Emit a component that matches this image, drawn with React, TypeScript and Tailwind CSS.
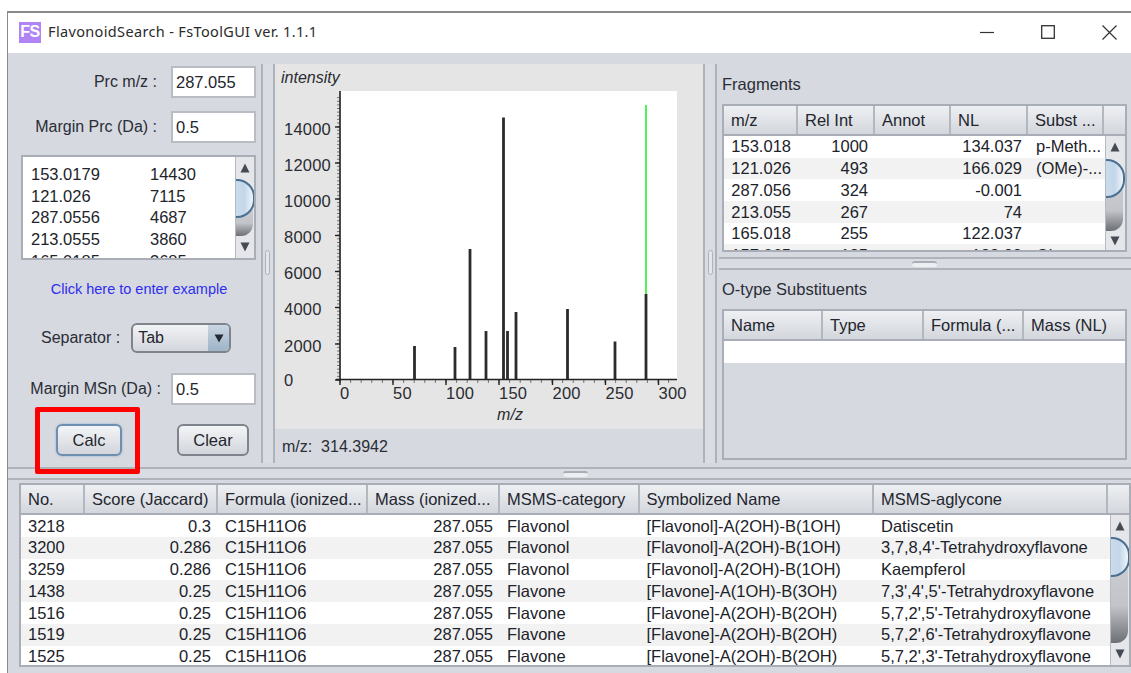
import React from "react";

const FONT = { fontFamily: '"Liberation Sans", Arial, sans-serif' };

function ScrollBar({ className, thumbTop, thumbH, shadeH }: { className: string; thumbTop: number; thumbH: number; shadeH: number }) {
  return (
    <div className={"relative shrink-0 overflow-hidden bg-[#e4e6ea] border-l border-[#b5b9c1] " + className}>
      <svg className="absolute left-[4px] top-[6px]" width="10" height="10" viewBox="0 0 10 10">
        <path d="M5 0.5 L9.5 9.5 L0.5 9.5 Z" fill="#454a55" />
      </svg>
      <svg className="absolute left-[4px] bottom-[6px]" width="10" height="10" viewBox="0 0 10 10">
        <path d="M5 9.5 L9.5 0.5 L0.5 0.5 Z" fill="#454a55" />
      </svg>
      <div
        className="absolute left-0 w-[17px] rounded-br-[12px] bg-gradient-to-b from-[#c9cbd0] via-[#c2c4c9] to-[#6d7076]"
        style={{ top: thumbTop + thumbH - 8, height: shadeH + 8 }}
      />
      <div
        className="absolute left-0 w-[19px] rounded-r-[18px] border-2 border-l-0 border-[#4a6f90] bg-gradient-to-r from-[#c9dcec] via-[#c3d7e9] to-[#f0f5fa]"
        style={{ top: thumbTop, height: thumbH }}
      />
    </div>
  );
}

function Field({ label, value, gap }: { label: string; value: string; gap: number }) {
  return (
    <div className="flex items-center justify-end">
      <span style={{ marginRight: gap }} className="text-[#2a2d36] text-[16px] whitespace-nowrap">{label}</span>
      <div className="w-[85px] h-[32px] bg-white border-2 border-[#b9bcc3] flex items-center pl-[3px] text-[#24262c] text-[16.5px]">
        {value}
      </div>
    </div>
  );
}

function HeaderCell({ w, children, last }: { w: number; children?: React.ReactNode; last?: boolean }) {
  return (
    <div
      style={{ width: w }}
      className={
        "shrink-0 h-full flex items-center pl-[7px] whitespace-nowrap overflow-hidden text-[#23262e] text-[16.5px] bg-gradient-to-b from-[#eef0f3] to-[#d3d6dc] " +
        (last ? "" : "border-r-2 border-[#b3b7bf]")
      }
    >
      {children}
    </div>
  );
}

type Cell = { t: string; w: number; right?: boolean; pl?: number; pr?: number };

function Row({ cells, odd, h }: { cells: Cell[]; odd: boolean; h: number }) {
  return (
    <div style={{ height: h }} className={"flex items-center text-[#20222a] text-[16.5px] whitespace-nowrap " + (odd ? "bg-[#f2f2f2]" : "bg-white")}>
      {cells.map((c, i) => (
        <div
          key={i}
          style={{ width: c.w, paddingLeft: c.pl ?? 0, paddingRight: c.pr ?? 0 }}
          className={"shrink-0 overflow-hidden " + (c.right ? "text-right" : "")}
        >
          {c.t}
        </div>
      ))}
    </div>
  );
}

// Vertical divider between the panes, with its small grip
function VSplit({ gripLeft }: { gripLeft: number }) {
  return (
    <div className="relative w-[14px] shrink-0 self-stretch border-x-2 border-[#aeb2b9] bg-[#d9dce2]">
      <div style={{ left: gripLeft }} className="absolute top-[186px] w-[5px] h-[25px] rounded-[3px] border border-[#aeb2b9] bg-[#e4e6ea]" />
    </div>
  );
}

function HSplit({ className, gripLeft }: { className: string; gripLeft: number }) {
  return (
    <div className={"relative shrink-0 h-[13px] border-y-2 border-[#aeb2b9] bg-[#d9dce2] " + className}>
      <div style={{ left: gripLeft }} className="absolute top-[2px] h-[6px] w-[25px] rounded-[3px] bg-[#eceef1] border-t-2 border-[#a9adb5]" />
    </div>
  );
}

const Y_TICKS: [string, number][] = [
  ["14000", 127],
  ["12000", 163],
  ["10000", 199],
  ["8000", 235.5],
  ["6000", 271.5],
  ["4000", 307.5],
  ["2000", 344],
  ["0", 380],
];
const X_TICKS: [string, number][] = [
  ["0", 340],
  ["50", 393],
  ["100", 446],
  ["150", 499],
  ["200", 552.5],
  ["250", 605.5],
  ["300", 658.5],
];
const PEAKS: [number, number][] = [
  [414.5, 346],
  [455, 347],
  [470, 249],
  [486, 331],
  [503.5, 117.5],
  [507.5, 331],
  [516, 312],
  [567.5, 309],
  [615, 341.5],
  [646, 294],
];

// Mass spectrum plot; coordinates are page positions shifted by the panel's corner
function Spectrum() {
  const ox = 275;
  const oy = 64;
  const minor: React.ReactNode[] = [];
  for (let v = 0; v <= 78; v++) {
    const y = 380 - v * 3.62 - oy;
    if (y < 27) break;
    minor.push(<line key={"y" + v} x1={337 - ox} x2={340 - ox} y1={y} y2={y} stroke="#55585f" strokeWidth="0.8" />);
  }
  for (let v = 0; v <= 31; v++) {
    const x = 340 + v * 10.6 - ox;
    minor.push(<line key={"x" + v} x1={x} x2={x} y1={380 - oy} y2={383 - oy} stroke="#55585f" strokeWidth="0.8" />);
  }
  return (
    <svg width="428" height="365" className="block" style={FONT}>
      <rect x={341 - ox} y={91 - oy} width={336} height={288} fill="#fff" />
      {minor}
      <line x1={340 - ox} x2={340 - ox} y1={91 - oy} y2={381 - oy} stroke="#222" strokeWidth="1.6" />
      <line x1={336 - ox} x2={677 - ox} y1={379.5 - oy} y2={379.5 - oy} stroke="#222" strokeWidth="1.6" />
      {Y_TICKS.map(([t, y]) => (
        <g key={t}>
          <line x1={335 - ox} x2={340 - ox} y1={y - oy} y2={y - oy} stroke="#222" strokeWidth="1.4" />
          <text x={284 - ox} y={y - oy + (t === "0" ? 6 : 7.5)} fontSize="16.5" letterSpacing="0.2" fill="#2a2c31">{t}</text>
        </g>
      ))}
      {X_TICKS.map(([t, x]) => (
        <g key={t}>
          <line x1={x - ox} x2={x - ox} y1={379 - oy} y2={385 - oy} stroke="#222" strokeWidth="1.4" />
          <text x={x - ox} y={399 - oy} fontSize="16.5" letterSpacing="0.2" fill="#2a2c31">{t}</text>
        </g>
      ))}
      <line x1={646 - ox} x2={646 - ox} y1={105 - oy} y2={295 - oy} stroke="#22f02a" strokeWidth="1.6" />
      {PEAKS.map(([x, top]) => (
        <line key={x} x1={x - ox} x2={x - ox} y1={top - oy} y2={379 - oy} stroke="#2b2b2b" strokeWidth="2.8" />
      ))}
      <text x={281 - ox} y={83 - oy} fontSize="16" fontStyle="italic" fill="#2a2c31">intensity</text>
      <text x={510 - ox} y={420 - oy} fontSize="16" fontStyle="italic" textAnchor="middle" fill="#2a2c31">m/z</text>
    </svg>
  );
}

const PEAK_LIST = [
  ["153.0179", "14430"],
  ["121.026", "7115"],
  ["287.0556", "4687"],
  ["213.0555", "3860"],
  ["165.0185", "3685"],
];

const FRAGMENTS = [
  ["153.018", "1000", "", "134.037", "p-Meth..."],
  ["121.026", "493", "", "166.029", "(OMe)-..."],
  ["287.056", "324", "", "-0.001", ""],
  ["213.055", "267", "", "74", ""],
  ["165.018", "255", "", "122.037", ""],
  ["157.065", "185", "", "129.99", "Ginno..."],
];

const HITS = [
  ["3218", "0.3", "[Flavonol]-A(2OH)-B(1OH)", "Flavonol", "Datiscetin"],
  ["3200", "0.286", "[Flavonol]-A(2OH)-B(1OH)", "Flavonol", "3,7,8,4'-Tetrahydroxyflavone"],
  ["3259", "0.286", "[Flavonol]-A(2OH)-B(1OH)", "Flavonol", "Kaempferol"],
  ["1438", "0.25", "[Flavone]-A(1OH)-B(3OH)", "Flavone", "7,3',4',5'-Tetrahydroxyflavone"],
  ["1516", "0.25", "[Flavone]-A(2OH)-B(2OH)", "Flavone", "5,7,2',5'-Tetrahydroxyflavone"],
  ["1519", "0.25", "[Flavone]-A(2OH)-B(2OH)", "Flavone", "5,7,2',6'-Tetrahydroxyflavone"],
  ["1525", "0.25", "[Flavone]-A(2OH)-B(2OH)", "Flavone", "5,7,2',3'-Tetrahydroxyflavone"],
];

export default function App() {
  return (
    <div style={FONT} className="w-[1131px] h-[673px] overflow-hidden bg-white pl-[7px] pt-[11px]">
      <div className="relative w-[1124px] h-[662px] flex flex-col border-l border-t-2 border-[#8a8a8a]">
        {/* Title bar */}
        <div className="h-[40px] shrink-0 bg-white flex items-center pl-[11px] pb-[2px]">
          <div className="w-[22px] h-[21px] bg-[#b184f5] text-white text-[16px] font-bold flex items-center justify-center tracking-tight">FS</div>
          <span className="ml-[7px] text-[#2b2b2b] tracking-[0.35px] text-[14.5px]" style={{ fontFamily: '"Noto Sans", sans-serif' }}>
            FlavonoidSearch - FsToolGUI ver. 1.1.1
          </span>
          <div className="ml-auto flex items-center gap-[47px] pr-[14px]">
            <svg width="14" height="14" viewBox="0 0 14 14"><path d="M0 7.5H14" stroke="#333" strokeWidth="1.2" /></svg>
            <svg width="14" height="14" viewBox="0 0 14 14"><rect x="0.7" y="0.7" width="12.6" height="12.6" fill="none" stroke="#333" strokeWidth="1.3" /></svg>
            <svg width="15" height="15" viewBox="0 0 15 15"><path d="M0.5 0.5L14.5 14.5M14.5 0.5L0.5 14.5" stroke="#333" strokeWidth="1.2" /></svg>
          </div>
        </div>

        <div className="flex-1 bg-[#d6d9e0] flex flex-col min-h-0">
          {/* Upper panes */}
          <div className="h-[414px] shrink-0 flex pt-[11px] pb-[4px]">
            {/* Input pane */}
            <div className="w-[253px] shrink-0 pr-[5px] pt-[2px]">
              <Field label="Prc m/z :" value="287.055" gap={14} />
              <div className="h-[13px]" />
              <Field label="Margin Prc (Da) :" value="0.5" gap={14} />
              <div className="ml-[13px] mt-[12px] h-[105px] flex border-2 border-[#a9adb5] bg-white overflow-hidden">
                <div className="flex-1 pt-[7px] pl-[8px] text-[16.5px] leading-[21.7px] text-[#22242a]">
                  {PEAK_LIST.map(([a, b]) => (
                    <div key={a} className="flex whitespace-nowrap"><span className="w-[119px]">{a}</span><span>{b}</span></div>
                  ))}
                </div>
                <ScrollBar className="w-[19px]" thumbTop={22} thumbH={39} shadeH={18} />
              </div>
              <div className="mt-[21px] text-center text-[14.5px] leading-[16px] text-[#2d2df0] pl-[14px]">Click here to enter example</div>
              <div className="mt-[26px] flex items-center pl-[33px]">
                <span className="text-[16px] text-[#2a2d36] whitespace-nowrap">Separator :</span>
                <div className="ml-[11px] w-[100px] h-[30px] rounded-[6px] border-2 border-[#7f848c] bg-gradient-to-b from-[#f2f3f5] to-[#d3d6dc] flex overflow-hidden">
                  <span className="flex-1 pl-[5px] text-[16px] leading-[26px] text-[#23262e]">Tab</span>
                  <div className="w-[21px] bg-gradient-to-b from-[#c9d6e2] to-[#9db3c7] flex items-center justify-center">
                    <svg width="10" height="9" viewBox="0 0 10 9"><path d="M0.5 0.5H9.5L5 8.5Z" fill="#262a33" /></svg>
                  </div>
                </div>
              </div>
              <div className="h-[20px]" />
              <Field label="Margin MSn (Da) :" value="0.5" gap={10} />
              <div className="mt-[19px] flex pl-[48px] gap-[55px]">
                <button className="w-[66px] h-[32px] rounded-[6px] border-2 border-[#6e8fb0] bg-gradient-to-b from-[#f4f5f7] to-[#d2d5db] text-[16.5px] text-[#23262e] shadow-[0_0_2px_#7aa3c8]">Calc</button>
                <button className="w-[72px] h-[32px] rounded-[6px] border-2 border-[#7f848c] bg-gradient-to-b from-[#f4f5f7] to-[#d2d5db] text-[16.5px] text-[#23262e]">Clear</button>
              </div>
            </div>

            <VSplit gripLeft={2} />

            {/* Spectrum pane */}
            <div className="w-[428px] shrink-0 flex flex-col">
              <div className="bg-[#e5e5e5] h-[365px] shrink-0"><Spectrum /></div>
              <div className="flex-1 pl-[7px] pt-[9px] text-[16px] leading-[18px] text-[#2a2d36]">m/z:&nbsp; 314.3942</div>
            </div>

            <VSplit gripLeft={3} />

            {/* Fragment and substituent tables */}
            <div className="flex-1 min-w-0 flex flex-col">
              <div className="h-[193px] shrink-0 pl-[5px] pr-[4px] overflow-hidden">
                <div className="h-[40px] pt-[11px] text-[16.5px] text-[#2a2d36] leading-[18px]">Fragments</div>
                <div className="h-[148px] border-2 border-[#a9adb5] overflow-hidden">
                  <div className="h-[30px] flex border-b-2 border-[#a9adb5]">
                    <HeaderCell w={74}>m/z</HeaderCell>
                    <HeaderCell w={77}>Rel Int</HeaderCell>
                    <HeaderCell w={76}>Annot</HeaderCell>
                    <HeaderCell w={77}>NL</HeaderCell>
                    <HeaderCell w={76}>Subst ...</HeaderCell>
                    <HeaderCell w={21} last />
                  </div>
                  <div className="flex">
                    <div className="w-[381px] shrink-0">
                      {FRAGMENTS.map((r, i) => (
                        <Row
                          key={r[0]}
                          h={21.7}
                          odd={i % 2 === 1}
                          cells={[
                            { t: r[0], w: 74, right: true, pr: 7 },
                            { t: r[1], w: 77, right: true, pr: 7 },
                            { t: r[2], w: 76 },
                            { t: r[3], w: 77, right: true, pr: 6 },
                            { t: r[4], w: 77, pl: 8 },
                          ]}
                        />
                      ))}
                    </div>
                    <ScrollBar className="w-[20px] h-[116px]" thumbTop={23} thumbH={39} shadeH={33} />
                  </div>
                </div>
              </div>
              <HSplit className="ml-[2px]" gripLeft={193} />
              <div className="pl-[5px] pr-[4px]">
                <div className="h-[39px] pt-[10px] text-[16.5px] text-[#2a2d36] leading-[18px]">O-type Substituents</div>
                <div className="h-[151px] border-2 border-[#a9adb5]">
                  <div className="h-[30px] flex border-b-2 border-[#a9adb5]">
                    <HeaderCell w={99}>Name</HeaderCell>
                    <HeaderCell w={101}>Type</HeaderCell>
                    <HeaderCell w={100}>Formula (...</HeaderCell>
                    <HeaderCell w={101} last>Mass (NL)</HeaderCell>
                  </div>
                  <div className="h-[22px] bg-white" />
                </div>
              </div>
            </div>
          </div>

          <HSplit className="" gripLeft={555} />

          {/* Search results */}
          <div className="ml-[11px] mt-[3px] h-[184px] border-2 border-[#a9adb5] overflow-hidden">
            <div className="h-[30px] flex border-b-2 border-[#a9adb5]">
              <HeaderCell w={64}>No.</HeaderCell>
              <HeaderCell w={133}>Score (Jaccard)</HeaderCell>
              <HeaderCell w={150}>Formula (ionized...</HeaderCell>
              <HeaderCell w={132}>Mass (ionized...</HeaderCell>
              <HeaderCell w={139.5}>MSMS-category</HeaderCell>
              <HeaderCell w={234.5}>Symbolized Name</HeaderCell>
              <HeaderCell w={234}>MSMS-aglycone</HeaderCell>
              <HeaderCell w={21} last />
            </div>
            <div className="flex">
              <div className="w-[1089px] shrink-0">
                {HITS.map((r, i) => (
                  <Row
                    key={r[0]}
                    h={21.75}
                    odd={i % 2 === 1}
                    cells={[
                      { t: r[0], w: 64, pl: 7 },
                      { t: r[1], w: 133, right: true, pr: 7 },
                      { t: "C15H11O6", w: 150, pl: 7 },
                      { t: "287.055", w: 132, right: true, pr: 7 },
                      { t: r[3], w: 139.5, pl: 7 },
                      { t: r[2], w: 234.5, pl: 7 },
                      { t: r[4], w: 236, pl: 7 },
                    ]}
                  />
                ))}
              </div>
              <ScrollBar className="w-[19px] h-[150px]" thumbTop={22} thumbH={40} shadeH={66} />
            </div>
          </div>
        </div>

        {/* Highlight round the Calc button */}
        <div className="absolute left-[27px] top-[394px] w-[105px] h-[67px] rounded-[2px] border-[5px] border-[#ff0000]" />
      </div>
    </div>
  );
}
